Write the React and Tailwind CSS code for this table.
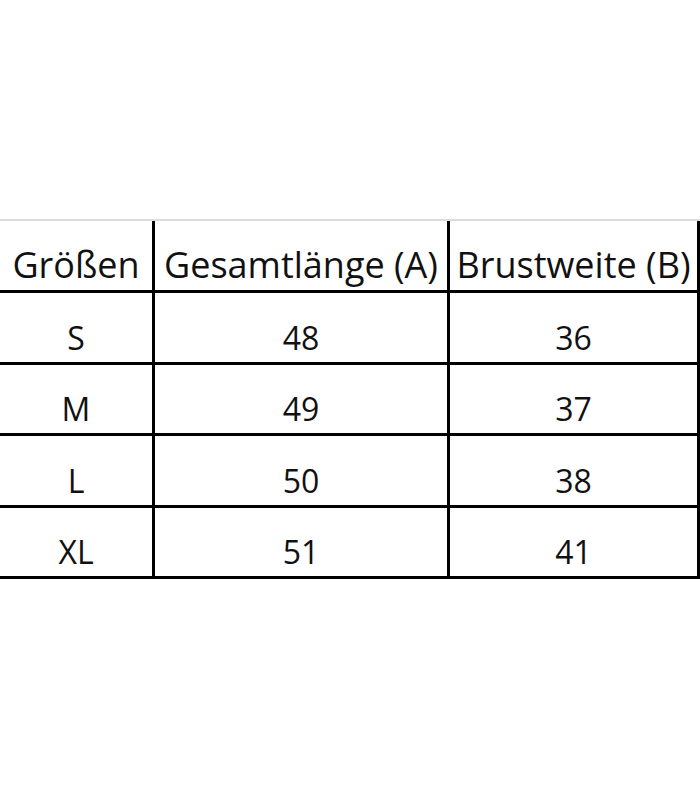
import React from "react";

const rows = [
  ["S", "48", "36"],
  ["M", "49", "37"],
  ["L", "50", "38"],
  ["XL", "51", "41"],
];

const cell =
  "flex items-end justify-center border-b-[3px] border-r-[3px] border-black leading-none whitespace-nowrap";

export default function App() {
  return (
    <div
      className="min-h-screen w-[700px] bg-white text-[#111]"
      style={{ fontFamily: '"Open Sans", "Liberation Sans", sans-serif' }}
    >
      <div className="pt-[219px]">
        <div className="border-t-2 border-[#dcdcdc]">
          <div className="grid grid-cols-[155px_295px_250px]">
            {/* header */}
            <div className={`${cell} h-[72px] pb-[7px] text-[36px]`}>Größen</div>
            <div className={`${cell} h-[72px] pb-[7px] text-[36px]`}>Gesamtlänge (A)</div>
            <div className={`${cell} h-[72px] pb-[7px] text-[36px]`}>Brustweite (B)</div>
            {rows.map((r, i) => (
              <React.Fragment key={r[0]}>
                <div className={`${cell} pb-[8px] text-[32px] ${i % 2 === 0 ? "h-[72px]" : "h-[71px]"}`}>{r[0]}</div>
                <div className={`${cell} pb-[8px] text-[32px] ${i % 2 === 0 ? "h-[72px]" : "h-[71px]"}`}>{r[1]}</div>
                <div className={`${cell} pb-[8px] text-[32px] ${i % 2 === 0 ? "h-[72px]" : "h-[71px]"}`}>{r[2]}</div>
              </React.Fragment>
            ))}
          </div>
        </div>
      </div>
    </div>
  );
}
